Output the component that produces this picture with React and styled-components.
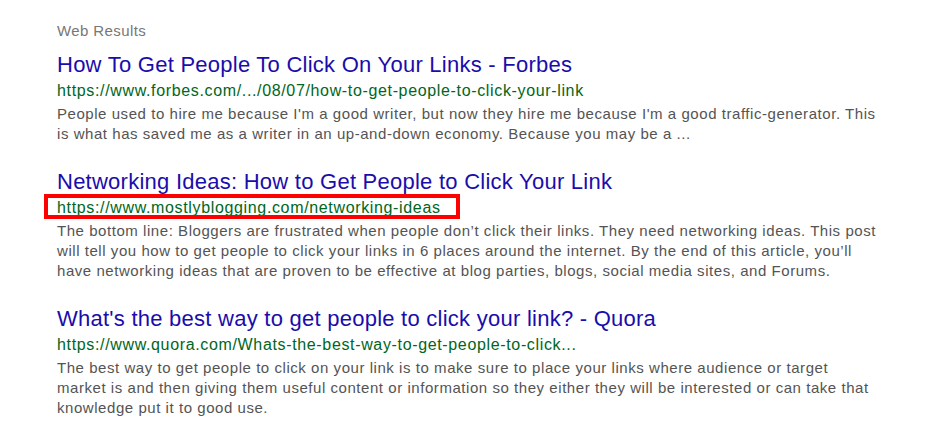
import React from "react"
import styled, { createGlobalStyle } from "styled-components"

const GlobalStyle = createGlobalStyle`
  body {
    margin: 0;
    background: #fff;
    font-family: "Liberation Sans", Arial, sans-serif;
  }
`

const Results = styled.div`
  padding: 21px 0 0 57px;
  width: 820px;
`

const Heading = styled.div`
  font-size: 15px;
  line-height: 20px;
  letter-spacing: 0.4px;
  color: #777;
  margin-bottom: 11px;
`

const Result = styled.div`
  margin-bottom: 25px;
`

const Title = styled.a`
  display: block;
  font-size: 22px;
  line-height: 26px;
  letter-spacing: 0.25px;
  color: #1a0dab;
  text-decoration: none;
`

const Url = styled.div`
  position: relative;
  margin-top: 2px;
  font-size: 16px;
  line-height: 22px;
  letter-spacing: 0.65px;
  color: #006621;
  white-space: nowrap;

  ${(p) =>
    p.$highlight &&
    `
    &::after {
      content: "";
      position: absolute;
      left: -13px;
      top: -3px;
      width: 408px;
      height: 17px;
      border: 4px solid #f00;
    }
  `}
`

const Snippet = styled.div`
  margin-top: 2px;
  font-size: 15px;
  line-height: 20px;
  letter-spacing: 0.55px;
  color: #545454;
`

const results = [
  {
    title: "How To Get People To Click On Your Links - Forbes",
    url: "https://www.forbes.com/.../08/07/how-to-get-people-to-click-your-link",
    snippet:
      "People used to hire me because I'm a good writer, but now they hire me because I'm a good traffic-generator. This is what has saved me as a writer in an up-and-down economy. Because you may be a ...",
  },
  {
    title: "Networking Ideas: How to Get People to Click Your Link",
    url: "https://www.mostlyblogging.com/networking-ideas",
    snippet:
      "The bottom line: Bloggers are frustrated when people don’t click their links. They need networking ideas. This post will tell you how to get people to click your links in 6 places around the internet. By the end of this article, you’ll have networking ideas that are proven to be effective at blog parties, blogs, social media sites, and Forums.",
    highlight: true,
  },
  {
    title: "What's the best way to get people to click your link? - Quora",
    url: "https://www.quora.com/Whats-the-best-way-to-get-people-to-click...",
    snippet:
      "The best way to get people to click on your link is to make sure to place your links where audience or target market is and then giving them useful content or information so they either they will be interested or can take that knowledge put it to good use.",
  },
]

const App = () => {
  return (
    <>
      <GlobalStyle />
      <Results>
        <Heading>Web Results</Heading>
        {results.map((r) => (
          <Result key={r.url}>
            <Title href="#">{r.title}</Title>
            <Url $highlight={r.highlight}>{r.url}</Url>
            <Snippet>{r.snippet}</Snippet>
          </Result>
        ))}
      </Results>
    </>
  )
}

export default App
